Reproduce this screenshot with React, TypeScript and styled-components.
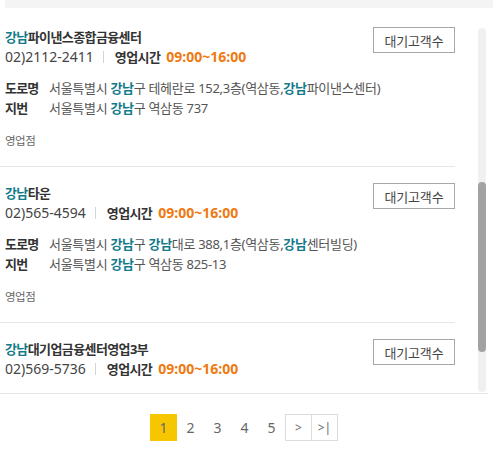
import { useLayoutEffect, useRef, useState } from "react";
import styled, { createGlobalStyle } from "styled-components";

const GlobalStyle = createGlobalStyle`
  body {
    margin: 0;
    background: #fff;
    font-family: "Noto Sans", "Noto Sans CJK KR", sans-serif;
    color: #333;
  }
`;

const Page = styled.div`
  width: 493px;
`;

const TopBar = styled.div`
  height: 8px;
  margin: 0 0 3px 5px;
  background: #f4f4f4;
`;

const ListFrame = styled.div`
  position: relative;
  width: 488px;
  border-bottom: 1px solid #e6e6e6;
`;

const Scroller = styled.div`
  width: 478px;
  height: 382px;
  overflow: hidden;
`;

const ScrollTrack = styled.div`
  position: absolute;
  left: 478px;
  top: 17px;
  bottom: 1px;
  width: 8px;
  border-radius: 4px;
  background: #f0f0f0;
`;

const ScrollThumb = styled.div`
  position: absolute;
  left: 0;
  width: 8px;
  border-radius: 4px;
  background: #a2a2a2;
`;

const List = styled.ul`
  list-style: none;
  margin: 0;
  padding: 34px 0 4px;
`;

const Item = styled.li`
  display: flex;
  justify-content: space-between;
  align-items: flex-start;
  margin-right: 23px;
  padding: 16px 0 15px 5px;
  border-bottom: 1px solid #e6e6e6;
`;

const Info = styled.div`
  flex: 1;
  min-width: 0;
  display: flex;
  flex-direction: column;
  white-space: nowrap;
`;

const Title = styled.div`
  font-size: 13px;
  font-weight: 700;
  line-height: 20px;
  letter-spacing: -0.6px;
  color: #333;
`;

const Hl = styled.b`
  color: #127a8a;
  font-weight: 700;
`;

const PhoneRow = styled.div`
  display: flex;
  align-items: center;
  font-size: 14px;
  line-height: 20px;
  color: #444;
`;

const Bar = styled.span`
  width: 1px;
  height: 12px;
  margin: 0 11px 0 9px;
  background: #d4d4d4;
`;

const HoursLabel = styled.b`
  font-size: 13px;
  font-weight: 700;
  letter-spacing: -0.6px;
  margin-right: 6px;
  color: #333;
`;

const Hours = styled.b`
  font-weight: 700;
  color: #ef7a12;
`;

const AddrBlock = styled.dl`
  display: grid;
  grid-template-columns: 44px auto;
  margin: 11px 0 0;
  line-height: 20px;
`;

const AddrLabel = styled.dt`
  font-weight: 700;
  color: #333;
  font-size: 13px;
  letter-spacing: -0.8px;
`;

const AddrValue = styled.dd`
  margin: 0;
  color: #555;
  font-size: 13px;
  letter-spacing: -0.3px;
`;

const Kind = styled.div`
  margin-top: 13px;
  font-size: 11.5px;
  line-height: 20px;
  color: #666;
  letter-spacing: -0.5px;
`;

const WaitButton = styled.button`
  flex-shrink: 0;
  width: 82px;
  height: 26px;
  padding: 0;
  border: 1px solid #a8a8a8;
  background: #fff;
  font-family: inherit;
  font-size: 13px;
  letter-spacing: -0.2px;
  color: #444;
  cursor: pointer;
`;

const Pager = styled.nav`
  display: flex;
  justify-content: center;
  width: 488px;
  margin-top: 20px;
`;

const PageNum = styled.a<{ $active?: boolean }>`
  display: flex;
  align-items: center;
  justify-content: center;
  width: 27px;
  height: 27px;
  font-size: 14px;
  color: #666;
  background: ${(p) => (p.$active ? "#f6c700" : "transparent")};
  text-decoration: none;
`;

const PageArrow = styled.a`
  display: flex;
  align-items: center;
  justify-content: center;
  width: 25px;
  height: 25px;
  border: 1px solid #dcdcdc;
  font-size: 12px;
  color: #666;
  text-decoration: none;

  & + & {
    margin-left: -1px;
  }
`;

type Branch = {
  name: string;
  phone: string;
  road: React.ReactNode;
  lot: React.ReactNode;
};

const branches: Branch[] = [
  {
    name: "역",
    phone: "02)557-0111",
    road: <>서울특별시 <Hl>강남</Hl>구 테헤란로 101</>,
    lot: <>서울특별시 <Hl>강남</Hl>구 역삼동 825-2</>,
  },
  {
    name: "중앙",
    phone: "02)538-2200",
    road: <>서울특별시 <Hl>강남</Hl>구 <Hl>강남</Hl>대로 374</>,
    lot: <>서울특별시 <Hl>강남</Hl>구 역삼동 826</>,
  },
  {
    name: "파이낸스종합금융센터",
    phone: "02)2112-2411",
    road: (
      <>
        서울특별시 <Hl>강남</Hl>구 테헤란로 152,3층(역삼동,<Hl>강남</Hl>파이낸스센터)
      </>
    ),
    lot: <>서울특별시 <Hl>강남</Hl>구 역삼동 737</>,
  },
  {
    name: "타운",
    phone: "02)565-4594",
    road: (
      <>
        서울특별시 <Hl>강남</Hl>구 <Hl>강남</Hl>대로 388,1층(역삼동,<Hl>강남</Hl>센터빌딩)
      </>
    ),
    lot: <>서울특별시 <Hl>강남</Hl>구 역삼동 825-13</>,
  },
  {
    name: "대기업금융센터영업3부",
    phone: "02)569-5736",
    road: <>서울특별시 <Hl>강남</Hl>구 <Hl>강남</Hl>대로 390</>,
    lot: <>서울특별시 <Hl>강남</Hl>구 역삼동 825-14</>,
  },
];

const TRACK = 364;

export default function App() {
  const scrollRef = useRef<HTMLDivElement>(null);
  const [thumb, setThumb] = useState({ top: 0, height: TRACK });

  useLayoutEffect(() => {
    const el = scrollRef.current;
    if (!el) return;
    el.scrollTop = 346;
    const ratio = TRACK / el.scrollHeight;
    setThumb({ top: el.scrollTop * ratio, height: el.clientHeight * ratio });
  }, []);

  return (
    <Page>
      <GlobalStyle />
      <TopBar />
      <ListFrame>
        <Scroller ref={scrollRef}>
          <List>
            {branches.map((b) => (
              <Item key={b.name}>
                <Info>
                  <Title>
                    <Hl>강남</Hl>
                    {b.name}
                  </Title>
                  <PhoneRow>
                    {b.phone}
                    <Bar />
                    <HoursLabel>영업시간</HoursLabel>
                    <Hours>09:00~16:00</Hours>
                  </PhoneRow>
                  <AddrBlock>
                    <AddrLabel>도로명</AddrLabel>
                    <AddrValue>{b.road}</AddrValue>
                    <AddrLabel>지번</AddrLabel>
                    <AddrValue>{b.lot}</AddrValue>
                  </AddrBlock>
                  <Kind>영업점</Kind>
                </Info>
                <WaitButton>대기고객수</WaitButton>
              </Item>
            ))}
          </List>
        </Scroller>
        <ScrollTrack>
          <ScrollThumb style={{ top: thumb.top, height: thumb.height }} />
        </ScrollTrack>
      </ListFrame>
      <Pager>
        <PageNum $active>1</PageNum>
        <PageNum>2</PageNum>
        <PageNum>3</PageNum>
        <PageNum>4</PageNum>
        <PageNum>5</PageNum>
        <PageArrow>&gt;</PageArrow>
        <PageArrow>&gt;|</PageArrow>
      </Pager>
    </Page>
  );
}
